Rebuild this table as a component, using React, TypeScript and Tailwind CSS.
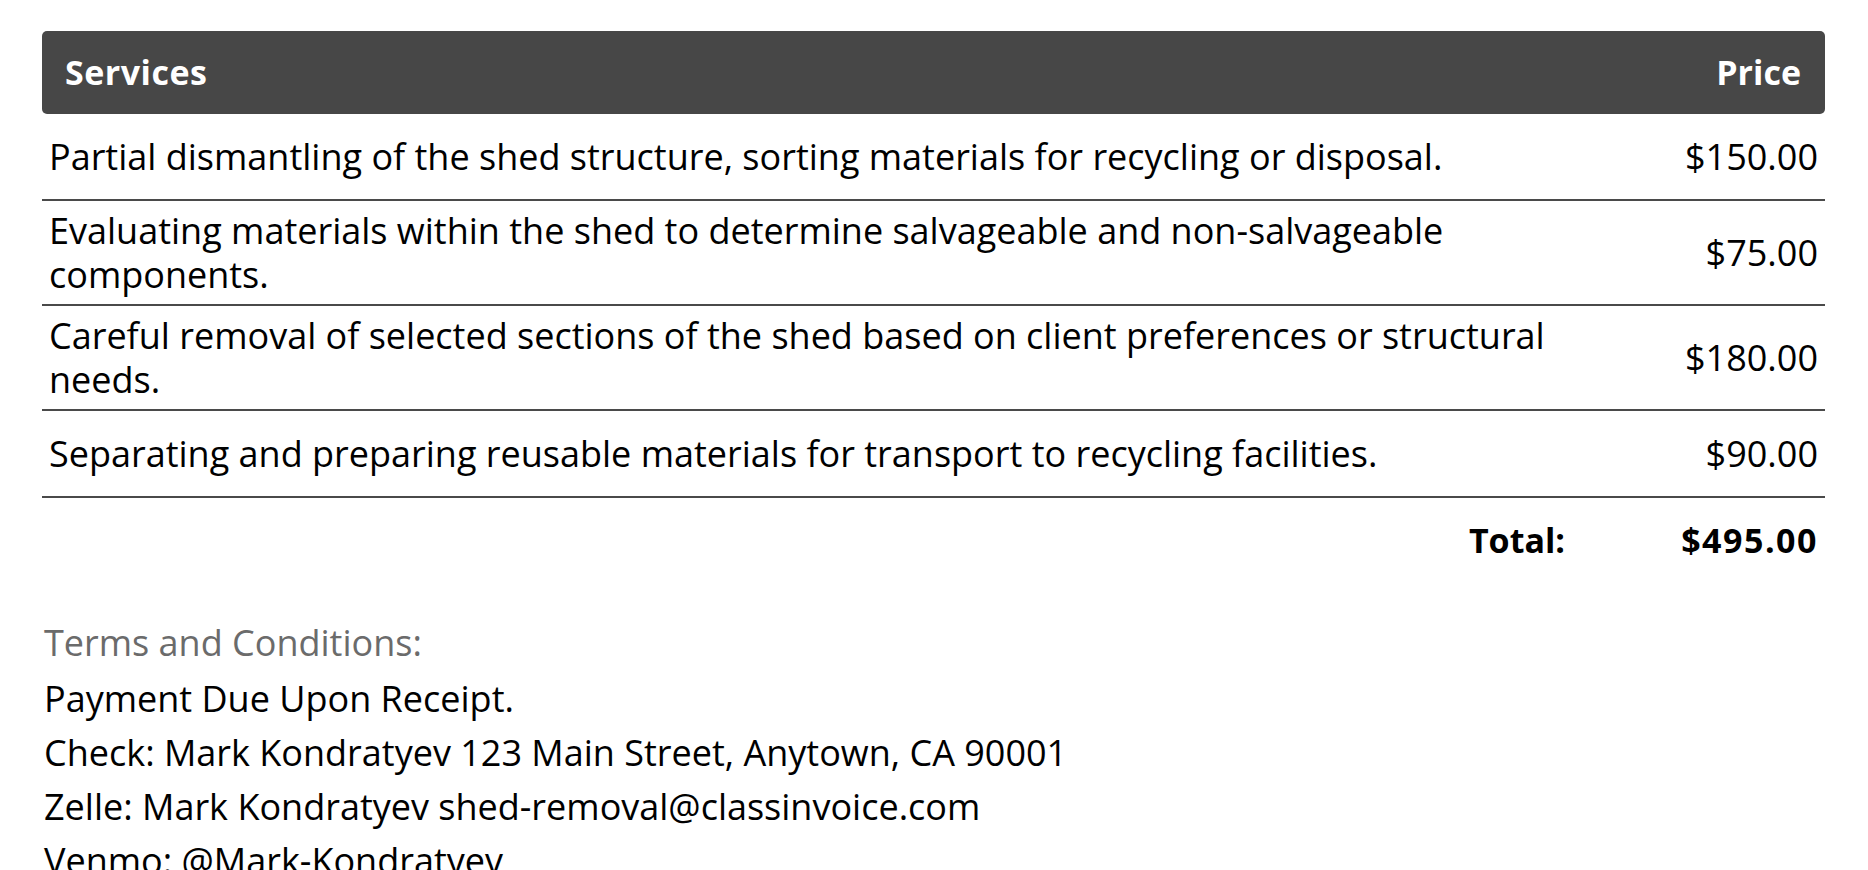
import React from 'react';

interface Item {
  description: string;
  price: string;
}

const items: Item[] = [
  { description: 'Partial dismantling of the shed structure, sorting materials for recycling or disposal.', price: '$150.00' },
  { description: 'Evaluating materials within the shed to determine salvageable and non-salvageable components.', price: '$75.00' },
  { description: 'Careful removal of selected sections of the shed based on client preferences or structural needs.', price: '$180.00' },
  { description: 'Separating and preparing reusable materials for transport to recycling facilities.', price: '$90.00' },
];

const terms = [
  'Payment Due Upon Receipt.',
  'Check: Mark Kondratyev 123 Main Street, Anytown, CA 90001',
  'Zelle: Mark Kondratyev shed-removal@classinvoice.com',
  'Venmo: @Mark-Kondratyev',
];

export default function App() {
  return (
    <div className="min-h-screen bg-white text-black font-['Open_Sans',sans-serif] pl-[42px] pr-[43px] pt-[31px]">
      {/* Services table */}
      <div className="w-full">
        <div className="flex items-center justify-between h-[83px] rounded-[5px] bg-[#474747] pl-[23px] pr-[24px] text-white text-[34px] font-bold">
          <span className="tracking-[0.5px]">Services</span>
          <span>Price</span>
        </div>

        {items.map((item) => (
          <div
            key={item.description}
            className="flex items-center min-h-[87px] py-[7.5px] border-b-2 border-[#4a4a4a] text-[36px] leading-[44px]"
          >
            <div className="flex-1 pl-[7px] pr-[8px]">{item.description}</div>
            <div className="w-[250px] shrink-0 text-right pr-[7px]">{item.price}</div>
          </div>
        ))}

        {/* Total */}
        <div className="flex items-center h-[84px] text-[34px] font-bold">
          <div className="flex-1 text-right pr-[10px]">Total:</div>
          <div className="w-[250px] shrink-0 text-right pr-[7px] tracking-[1.5px]">$495.00</div>
        </div>
      </div>

      {/* Terms */}
      <div className="mt-[34px] pl-[2px] text-[36px] leading-[54px]">
        <div className="text-[#6b6b6b] mb-[2px]">Terms and Conditions:</div>
        {terms.map((line) => (
          <div key={line}>{line}</div>
        ))}
      </div>
    </div>
  );
}
